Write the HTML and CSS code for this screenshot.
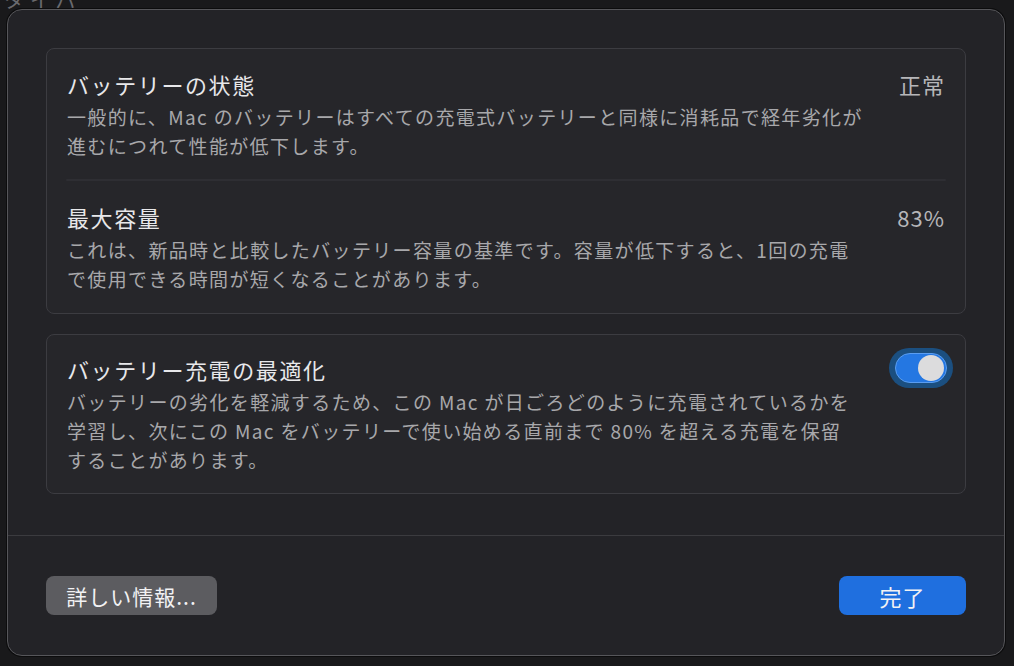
FILE: index.html
```html
<!DOCTYPE html>
<html lang="ja">
<head>
  <meta charset="UTF-8" />
  <title>バッテリーの状態</title>
  <link rel="stylesheet" href="styles.css">
</head>
<body>
  <div class="backdrop">タイパ</div>
  <div class="sheet">
    <div class="sheet-body">
      <div class="panel">
        <div class="row">
          <div class="row-text">
            <div class="row-title">バッテリーの状態</div>
            <div class="row-desc">一般的に、Mac のバッテリーはすべての充電式バッテリーと同様に消耗品で経年劣化が<br>進むにつれて性能が低下します。</div>
          </div>
          <div class="row-value">正常</div>
        </div>
        <div class="row-sep"></div>
        <div class="row row-last">
          <div class="row-text">
            <div class="row-title">最大容量</div>
            <div class="row-desc">これは、新品時と比較したバッテリー容量の基準です。容量が低下すると、1回の充電<br>で使用できる時間が短くなることがあります。</div>
          </div>
          <div class="row-value">83%</div>
        </div>
      </div>
      <div class="panel panel-toggle">
        <div class="row row-single">
          <div class="row-text">
            <div class="row-title">バッテリー充電の最適化</div>
            <div class="row-desc">バッテリーの劣化を軽減するため、この Mac が日ごろどのように充電されているかを<br>学習し、次にこの Mac をバッテリーで使い始める直前まで 80% を超える充電を保留<br>することがあります。</div>
          </div>
          <div class="switch-ring">
            <div class="switch on"><span class="knob"></span></div>
          </div>
        </div>
      </div>
    </div>
    <div class="sheet-footer">
      <button class="btn btn-grey">詳しい情報...</button>
      <button class="btn btn-blue">完了</button>
    </div>
  </div>
</body>
</html>
```

FILE: styles.css
```css
html, body {
  margin: 0;
  height: 100%;
}
body {
  width: 1014px;
  height: 666px;
  overflow: hidden;
  background: #19191b;
  font-family: "Noto Sans CJK JP", "Noto Sans", sans-serif;
  color: #e6e6e8;
  padding: 9px 0 0 7px;
  box-sizing: border-box;
  position: relative;
}
.backdrop {
  position: absolute;
  left: 4px;
  top: -12px;
  font-size: 20px;
  line-height: 24px;
  color: #6a6a6e;
  letter-spacing: 6px;
}
.sheet {
  position: relative;
  width: 998px;
  height: 647px;
  box-sizing: border-box;
  background: #232327;
  border: 1px solid #56565a;
  border-radius: 15px;
  box-shadow: 0 0 0 1px #0c0c0d;
  display: flex;
  flex-direction: column;
}
.sheet-body {
  padding: 38px 38px 0 38px;
  height: 526px;
  box-sizing: border-box;
  border-bottom: 1px solid #3b3b3f;
}
.panel {
  background: #26262a;
  border: 1px solid #3c3c41;
  border-radius: 8px;
}
.panel-toggle {
  margin-top: 20px;
}
.row {
  display: flex;
  align-items: flex-start;
  justify-content: space-between;
  padding: 20px 20px 19px 20px;
}
.row-last {
  padding: 21px 20px 20px 20px;
}
.row-single {
  padding: 19px 19px 19px 20px;
}
.row-sep {
  height: 2px;
  margin: 0 19px 0 19px;
  background: #2e2e33;
  border-radius: 1px;
}
.row-title {
  font-size: 22px;
  line-height: 30px;
  letter-spacing: 1.6px;
  color: #e8e8ea;
  margin-bottom: 3px;
}
.row-desc {
  font-size: 19px;
  line-height: 29px;
  letter-spacing: 1.35px;
  color: #a8a8ab;
  white-space: nowrap;
}
.row-value {
  font-size: 22px;
  line-height: 30px;
  letter-spacing: 1px;
  color: #b6b6b9;
}
.switch-ring {
  margin: -6px -7px 0 0;
  padding: 5px 6px;
  border-radius: 22px;
  background: #1b4f80;
}
.switch {
  width: 52px;
  height: 30px;
  box-sizing: border-box;
  border-radius: 15px;
  border: 1px solid #5a9df0;
  background: #2477e2;
  display: flex;
  align-items: center;
  justify-content: flex-end;
  padding: 0 2px;
}
.knob {
  width: 26px;
  height: 26px;
  border-radius: 50%;
  background: #dcdcdd;
}
.sheet-footer {
  flex: 1;
  display: flex;
  justify-content: space-between;
  align-items: flex-start;
  padding: 40px 38px 0 38px;
}
.btn {
  height: 39px;
  border: none;
  border-radius: 8px;
  font-family: "Noto Sans CJK JP", "Noto Sans", sans-serif;
  font-size: 21px;
  letter-spacing: 1px;
  color: #f2f2f4;
  padding: 0;
}
.btn-grey {
  width: 171px;
  background: #5c5c60;
}
.btn-blue {
  width: 127px;
  background: #1f6fdf;
  font-size: 22px;
}
```
